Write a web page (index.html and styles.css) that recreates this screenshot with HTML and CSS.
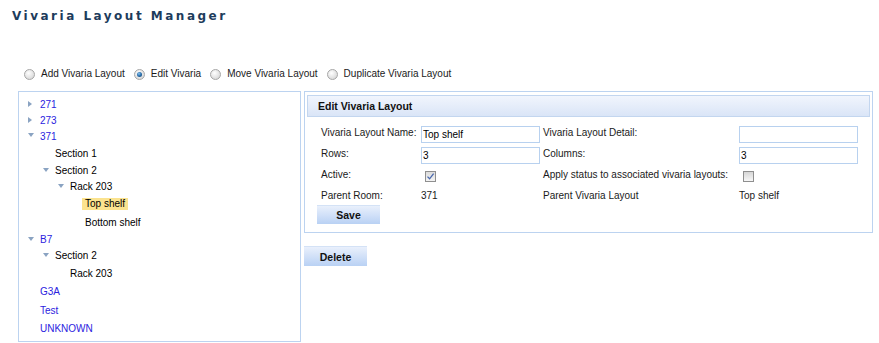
FILE: index.html
```html
<!DOCTYPE html>
<html>
<head>
<meta charset="utf-8">
<title>Vivaria Layout Manager</title>
<link rel="stylesheet" href="styles.css">
</head>
<body>
<h1 class="title">Vivaria Layout Manager</h1>

<div class="modes">
  <span class="radio"></span><span class="mode-label">Add Vivaria Layout</span>
  <span class="radio checked"></span><span class="mode-label">Edit Vivaria</span>
  <span class="radio"></span><span class="mode-label">Move Vivaria Layout</span>
  <span class="radio"></span><span class="mode-label">Duplicate Vivaria Layout</span>
</div>

<div class="main">
  <div class="tree">
    <div class="row l0"><span class="tog collapsed"></span><span class="root">271</span></div>
    <div class="row l0"><span class="tog collapsed"></span><span class="root">273</span></div>
    <div class="row l0"><span class="tog expanded"></span><span class="root">371</span></div>
    <div class="row leaf l1"><span class="tog"></span><span>Section 1</span></div>
    <div class="row l1"><span class="tog expanded"></span><span>Section 2</span></div>
    <div class="row l2"><span class="tog expanded"></span><span>Rack 203</span></div>
    <div class="row leaf l3"><span class="tog"></span><span class="sel">Top shelf</span></div>
    <div class="row leaf l3"><span class="tog"></span><span>Bottom shelf</span></div>
    <div class="row l0"><span class="tog expanded"></span><span class="root">B7</span></div>
    <div class="row l1"><span class="tog expanded"></span><span>Section 2</span></div>
    <div class="row leaf l2"><span class="tog"></span><span>Rack 203</span></div>
    <div class="row leaf l0"><span class="tog"></span><span class="root">G3A</span></div>
    <div class="row leaf l0"><span class="tog"></span><span class="root">Test</span></div>
    <div class="row leaf l0"><span class="tog"></span><span class="root">UNKNOWN</span></div>
  </div>

  <div class="right">
    <div class="panel">
      <div class="panel-head">Edit Vivaria Layout</div>
      <div class="form">
        <span class="lbl">Vivaria Layout Name:</span>
        <span><input class="field" type="text" value="Top shelf"></span>
        <span class="lbl">Vivaria Layout Detail:</span>
        <span><input class="field" type="text" value=""></span>

        <span class="lbl">Rows:</span>
        <span><input class="field" type="text" value="3"></span>
        <span class="lbl">Columns:</span>
        <span><input class="field" type="text" value="3"></span>

        <span class="lbl">Active:</span>
        <span><span class="check on"><svg width="9" height="9" viewBox="0 0 9 9"><path d="M1.5 4.6 L3.6 6.8 L7.6 1.6" fill="none" stroke="#4a68ad" stroke-width="1.3"/></svg></span></span>
        <span class="lbl">Apply status to associated vivaria layouts:</span>
        <span><span class="check"></span></span>

        <span class="lbl">Parent Room:</span>
        <span class="lbl">371</span>
        <span class="lbl">Parent Vivaria Layout</span>
        <span class="lbl">Top shelf</span>
      </div>
      <button class="btn save">Save</button>
    </div>
    <button class="btn delete">Delete</button>
  </div>
</div>
</body>
</html>
```

FILE: styles.css
```css
body {
  margin: 0;
  width: 879px;
  background: #fff;
  color: #1a1a1a;
  font-family: "Liberation Sans", Arial, sans-serif;
  font-size: 10px;
}

.title {
  margin: 0;
  padding: 9px 0 0 12px;
  height: 14px;
  line-height: 14px;
  font-family: "DejaVu Sans", Verdana, sans-serif;
  font-size: 12px;
  font-weight: bold;
  letter-spacing: 2.5px;
  color: #1d3c5c;
}

.modes {
  display: flex;
  align-items: center;
  height: 12px;
  margin-top: 45px;
  padding-left: 24px;
  color: #1a1a1a;
}

.radio {
  position: relative;
  width: 11px;
  height: 11px;
  box-sizing: border-box;
  border-radius: 50%;
  border: 1px solid #a6a6a6;
  background: radial-gradient(circle at 40% 35%, #ffffff 0, #f0f0f0 30%, #cfcfcf 100%);
  margin-right: 6px;
  flex: none;
}

.radio.checked::after {
  content: "";
  position: absolute;
  left: 2px;
  top: 2px;
  width: 5px;
  height: 5px;
  border-radius: 50%;
  background: radial-gradient(circle at 40% 35%, #8cc4f0 0, #2f74b0 45%, #0f3d6c 100%);
}

.mode-label {
  margin-right: 9px;
  line-height: 12px;
}

.main {
  display: flex;
  gap: 3px;
  margin-top: 11px;
  padding-left: 18px;
}

.tree {
  width: 283px;
  height: 251px;
  box-sizing: border-box;
  border: 1px solid #bcd3f0;
  padding: 4px 0 0 9px;
}

.row {
  display: flex;
  align-items: center;
  height: 16px;
  color: #000;
}

.row.leaf {
  height: 18.6px;
}

.l1 { padding-left: 15px; }
.l2 { padding-left: 30px; }
.l3 { padding-left: 45px; }

.tog {
  width: 12px;
  height: 8px;
  flex: none;
  position: relative;
}

.tog.collapsed::before {
  content: "";
  position: absolute;
  left: 0;
  top: 1px;
  border-left: 4px solid #8aa3c2;
  border-top: 3px solid transparent;
  border-bottom: 3px solid transparent;
}

.tog.expanded::before {
  content: "";
  position: absolute;
  left: 0;
  top: 1px;
  border-top: 4px solid #8aa3c2;
  border-left: 3px solid transparent;
  border-right: 3px solid transparent;
}

.root {
  color: #2b22e0;
}

.sel {
  background: #fbe38f;
  padding: 0 3px;
  margin-left: -3px;
  line-height: 12px;
}

.right {
  width: 569px;
  display: flex;
  flex-direction: column;
  align-items: flex-start;
}

.panel {
  width: 569px;
  box-sizing: border-box;
  border: 1px solid #bcd3f0;
  padding: 3px 2px 8px;
}

.panel-head {
  height: 22px;
  box-sizing: border-box;
  border: 1px solid #c3d6ef;
  background: linear-gradient(#f1f5fd, #dae5f7);
  padding-left: 10px;
  line-height: 20px;
  font-size: 10.5px;
  font-weight: bold;
  color: #111;
}

.form {
  display: grid;
  grid-template-columns: 100px 122px 196px 119px;
  grid-template-rows: 17px 17px 17px 13px;
  row-gap: 4px;
  margin: 9px 0 0 14px;
}

.lbl {
  line-height: 13px;
  white-space: nowrap;
}

.field {
  display: block;
  width: 119px;
  height: 17px;
  box-sizing: border-box;
  margin: 0;
  border: 1px solid #b8d1ef;
  padding: 0 1px;
  outline: none;
  background: #fff;
  font-family: "Liberation Sans", Arial, sans-serif;
  font-size: 10px;
  color: #000;
}

.check {
  display: flex;
  align-items: center;
  justify-content: center;
  width: 11px;
  height: 11px;
  box-sizing: border-box;
  margin: 3px 0 0 4px;
  border: 1px solid #8f8f8f;
  background: linear-gradient(#d6d6d6, #f7f7f7);
}

.check.on {
  background: linear-gradient(#dcdcdc, #f4f4f4);
}

.btn {
  display: block;
  margin: 0;
  padding: 0;
  width: 63px;
  border: none;
  border-top: 1px solid #d4e2f6;
  background: linear-gradient(#e9f0fc, #b9d1f4);
  font-family: "Liberation Sans", Arial, sans-serif;
  font-size: 10.5px;
  font-weight: bold;
  color: #111;
}

.save {
  height: 19px;
  margin: 3px 0 0 10px;
}

.delete {
  height: 20px;
  margin-top: 13px;
}
```
